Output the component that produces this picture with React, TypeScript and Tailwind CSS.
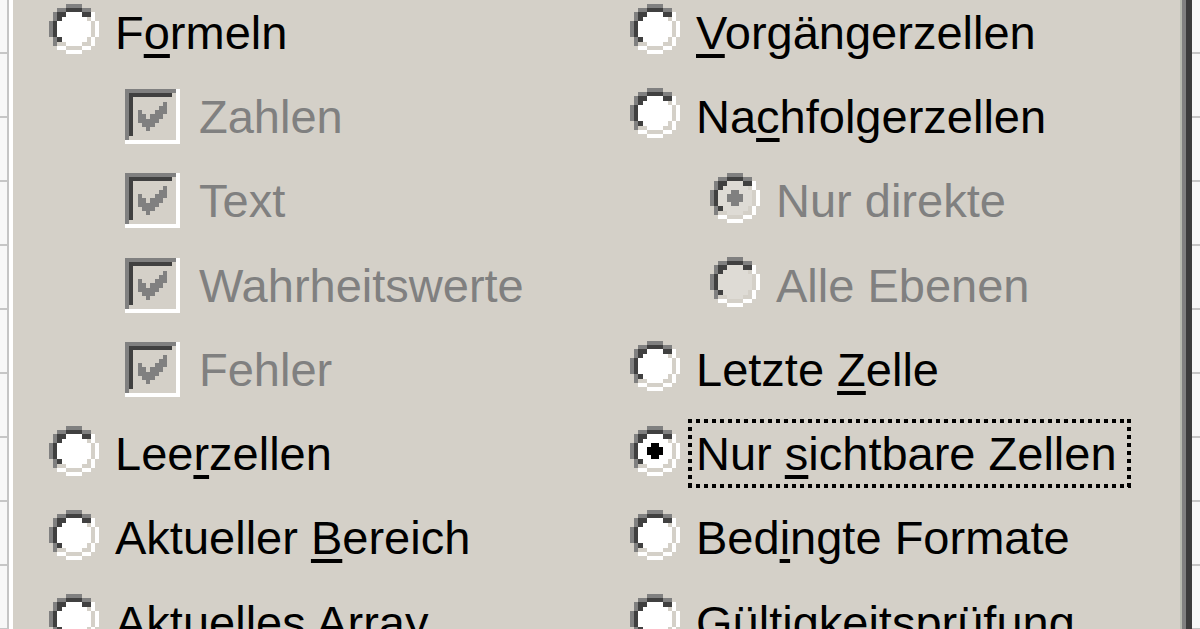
import React from 'react'

const FACE = '#d4d0c8'

const RADIO = [
  '....GGGG....',
  '..GGDDDDGG..',
  '.GDDIIIIDDW.',
  '.GDIIIIIILW.',
  'GDIIIIIIIILW',
  'GDIIIIIIIILW',
  'GDIIIIIIIILW',
  'GDIIIIIIIILW',
  '.GDIIIIIILW.',
  '.GLLIIIILLW.',
  '..WWLLLLWW..',
  '....WWWW....',
]

const DOT = [
  '............',
  '............',
  '............',
  '............',
  '.....XX.....',
  '....XXXX....',
  '....XXXX....',
  '.....XX.....',
]

const CHECKBOX = [
  'GGGGGGGGGGGGW',
  'GDDDDDDDDDDLW',
  'GDIIIIIIIIILW',
  'GDIIIIIIIIILW',
  'GDIIIIIIIIILW',
  'GDIIIIIIIIILW',
  'GDIIIIIIIIILW',
  'GDIIIIIIIIILW',
  'GDIIIIIIIIILW',
  'GDIIIIIIIIILW',
  'GDIIIIIIIIILW',
  'GLLLLLLLLLLLW',
  'WWWWWWWWWWWWW',
]

const TICK = [
  '......X',
  '.....XX',
  'X...XXX',
  'XX.XXX.',
  'XXXXX..',
  '.XXX...',
  '..X....',
]

function Pixels({ maps, colors, n, size }: { maps: { rows: string[]; dx: number; dy: number }[]; colors: Record<string, string>; n: number; size: number }) {
  const cells: React.ReactNode[] = []
  maps.forEach((m, mi) =>
    m.rows.forEach((row, y) =>
      row.split('').forEach((ch, x) => {
        const fill = colors[ch]
        if (fill) cells.push(<rect key={`${mi}-${x}-${y}`} x={x + m.dx} y={y + m.dy} width={1} height={1} fill={fill} />)
      }),
    ),
  )
  return (
    <svg width={size} height={size} viewBox={`0 0 ${n} ${n}`} shapeRendering="crispEdges" className="shrink-0">
      {cells}
    </svg>
  )
}

function Radio({ checked, disabled }: { checked?: boolean; disabled?: boolean }) {
  const colors = { G: '#808080', D: '#404040', L: FACE, W: '#ffffff', I: disabled ? '#dedbd5' : '#ffffff', X: disabled ? '#808080' : '#000000' }
  const maps = [{ rows: RADIO, dx: 0, dy: 0 }]
  if (checked) maps.push({ rows: DOT, dx: 0, dy: 0 })
  return (
    <div className="-mt-[6px]">
      <Pixels maps={maps} colors={colors} n={12} size={50} />
    </div>
  )
}

function Checkbox({ checked, disabled }: { checked?: boolean; disabled?: boolean }) {
  const colors = { G: '#808080', D: '#404040', L: FACE, W: '#ffffff', I: disabled ? FACE : '#ffffff', X: disabled ? '#808080' : '#000000' }
  const maps = [{ rows: CHECKBOX, dx: 0, dy: 0 }]
  if (checked) maps.push({ rows: TICK, dx: 3, dy: 3 })
  return <Pixels maps={maps} colors={colors} n={13} size={55} />
}

// "&" marks the mnemonic letter, as in a Windows resource string
function Label({ text }: { text: string }) {
  const i = text.indexOf('&')
  if (i < 0) return <>{text}</>
  return (
    <>
      {text.slice(0, i)}
      <span className="underline decoration-[4px] underline-offset-[5px]">{text[i + 1]}</span>
      {text.slice(i + 2)}
    </>
  )
}

function FocusRect({ children }: { children: React.ReactNode }) {
  return (
    <span className="relative -ml-2 flex h-[69px] items-center pl-2 pr-[14px]">
      <span className="absolute left-0 right-0 top-0 h-[4px] bg-[repeating-linear-gradient(90deg,#000_0_4px,transparent_4px_8px)]" />
      <span className="absolute bottom-0 left-0 right-0 h-[4px] bg-[repeating-linear-gradient(90deg,#000_0_4px,transparent_4px_8px)]" />
      <span className="absolute bottom-0 left-0 top-0 w-[4px] bg-[repeating-linear-gradient(180deg,#000_0_4px,transparent_4px_8px)]" />
      <span className="absolute bottom-0 right-0 top-0 w-[4px] bg-[repeating-linear-gradient(180deg,#000_0_4px,transparent_4px_8px)]" />
      {children}
    </span>
  )
}

type Option = {
  text: string
  kind: 'radio' | 'check' | 'sub'
  checked?: boolean
  disabled?: boolean
  focus?: boolean
}

const leftColumn: Option[] = [
  { text: 'F&ormeln', kind: 'radio' },
  { text: 'Zahlen', kind: 'check', checked: true, disabled: true },
  { text: 'Text', kind: 'check', checked: true, disabled: true },
  { text: 'Wahrheitswerte', kind: 'check', checked: true, disabled: true },
  { text: 'Fehler', kind: 'check', checked: true, disabled: true },
  { text: 'Lee&rzellen', kind: 'radio' },
  { text: 'Aktueller &Bereich', kind: 'radio' },
  { text: 'Aktuelles Array', kind: 'radio' },
]

const rightColumn: Option[] = [
  { text: '&Vorgängerzellen', kind: 'radio' },
  { text: 'Na&chfolgerzellen', kind: 'radio' },
  { text: 'Nur direkte', kind: 'sub', checked: true, disabled: true },
  { text: 'Alle Ebenen', kind: 'sub', disabled: true },
  { text: 'Letzte &Zelle', kind: 'radio' },
  { text: 'Nur &sichtbare Zellen', kind: 'radio', checked: true, focus: true },
  { text: 'Bed&ingte Formate', kind: 'radio' },
  { text: 'Gültigkeitsprüfung', kind: 'radio' },
]

function OptionRow({ o }: { o: Option }) {
  const textCls = o.disabled ? 'text-[#808080]' : 'text-black'
  const label = <span className={`whitespace-nowrap leading-none ${textCls}`}><Label text={o.text} /></span>

  if (o.kind === 'check') {
    return (
      <div className="flex h-[84.3px] items-center gap-[19px] pl-[76px]">
        <Checkbox checked={o.checked} disabled={o.disabled} />
        {label}
      </div>
    )
  }

  return (
    <div className={`flex h-[84.3px] items-center gap-4 ${o.kind === 'sub' ? 'pl-[80px]' : ''}`}>
      <Radio checked={o.checked} disabled={o.disabled} />
      {o.focus ? <FocusRect>{label}</FocusRect> : label}
    </div>
  )
}

function SheetStrip({ width }: { width: string }) {
  return <div className={`${width} h-full bg-[#f7f7f7] bg-[repeating-linear-gradient(180deg,transparent_0_52px,#c6c6c6_52px_54px,transparent_54px_64px)]`} />
}

export default function App() {
  return (
    <div className="flex h-[629px] w-[1200px] overflow-hidden bg-white font-['Liberation_Sans',Arial,sans-serif] text-[47px]">
      <SheetStrip width="w-[7px]" />
      <div className="h-full w-[2px] bg-[#c4c4c4]" />
      <div className="h-full w-[4px] bg-white" />

      <div className="h-full flex-1 bg-[#d4d0c8] pl-[36px]">
        <div className="-mt-[10px] flex">
          <div className="w-[581px]">
            {leftColumn.map((o) => (
              <OptionRow key={o.text} o={o} />
            ))}
          </div>
          <div>
            {rightColumn.map((o) => (
              <OptionRow key={o.text} o={o} />
            ))}
          </div>
        </div>
      </div>

      <div className="h-full w-[2px] bg-[#b8bab0]" />
      <div className="h-full w-[4px] bg-[#808080]" />
      <div className="h-full w-[6px] bg-[#3c3c3c]" />
      <SheetStrip width="w-[8px]" />
    </div>
  )
}
